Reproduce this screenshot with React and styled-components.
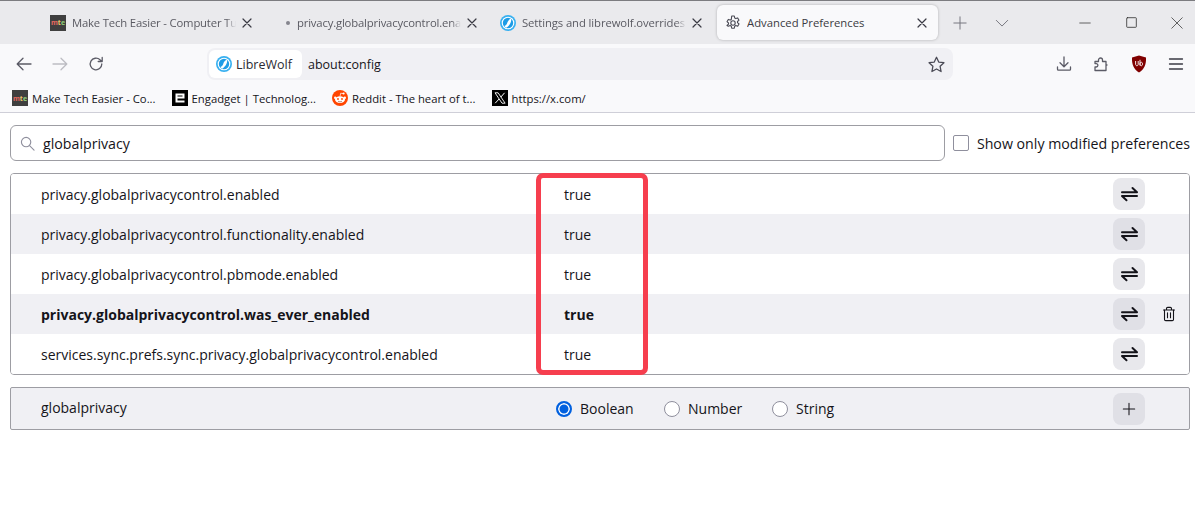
import React from 'react'
import styled, { createGlobalStyle } from 'styled-components'

const FONT = '"Open Sans", "Noto Sans", sans-serif'

const prefs = [
  { name: 'privacy.globalprivacycontrol.enabled' },
  { name: 'privacy.globalprivacycontrol.functionality.enabled' },
  { name: 'privacy.globalprivacycontrol.pbmode.enabled' },
  { name: 'privacy.globalprivacycontrol.was_ever_enabled', modified: true },
  { name: 'services.sync.prefs.sync.privacy.globalprivacycontrol.enabled' },
]

function Icon({ size = 16, color = '#5b5b66', width = 1.3, children }) {
  return (
    <svg width={size} height={size} viewBox="0 0 16 16" fill="none" stroke={color} strokeWidth={width} strokeLinecap="round" strokeLinejoin="round">
      {children}
    </svg>
  )
}

const CloseIcon = ({ size = 10, color = '#3a3a44' }) => (
  <svg width={size} height={size} viewBox="0 0 10 10" fill="none" stroke={color} strokeWidth="1.2" strokeLinecap="round">
    <path d="M1 1l8 8M9 1l-8 8" />
  </svg>
)

const GearIcon = () => (
  <Icon color="#4a4a55" width={1.1}>
    <path d="M6.7 1h2.6l.4 2 1.1.6 1.9-.7 1.3 2.3-1.5 1.3v1.2l1.5 1.3-1.3 2.3-1.9-.7-1.1.6-.4 2H6.7l-.4-2-1.1-.6-1.9.7L2 10.5l1.5-1.3V8L2 6.7l1.3-2.3 1.9.7 1.1-.6z" />
    <circle cx="8" cy="8" r="2.2" />
  </Icon>
)

const ToggleIcon = () => (
  <svg width="17" height="16" viewBox="0 0 17 16" fill="none" stroke="#15141a" strokeWidth="2" strokeLinecap="round" strokeLinejoin="round">
    <path d="M1 6.200h15L11.500 2" />
    <path d="M16 10H1l4.500 4.200" />
  </svg>
)

const TrashIcon = () => (
  <Icon size={16} color="#15141a" width={1.1}>
    <path d="M2.5 4h11M5.5 4V2.6c0-.8.5-1.2 1.2-1.2h2.6c.7 0 1.2.4 1.2 1.2V4" />
    <path d="M3.5 4v9.4c0 .7.5 1.2 1.2 1.2h6.6c.7 0 1.2-.5 1.2-1.2V4" />
    <path d="M6.5 6.8v5M9.5 6.8v5" />
  </Icon>
)

const MteLogo = () => (
  <MteBox>
    <MteLetter $color="#e8695f">m</MteLetter>
    <MteLetter $color="#e9c46a">t</MteLetter>
    <MteLetter $color="#8fd07a">e</MteLetter>
  </MteBox>
)

const LibreWolfLogo = ({ size = 16 }) => (
  <svg width={size} height={size} viewBox="0 0 16 16">
    <circle cx="8" cy="8" r="8" fill="#38b0f0" />
    <circle cx="8" cy="8" r="6.3" fill="#fff" />
    <circle cx="8" cy="8" r="5.2" fill="#1e9ce6" />
    <path d="M11.2 3.6c.3 3-1 6.6-5 9.2-.8-.5-1.4-1-1.8-1.8 1.6-.4 2.4-1.6 2.8-3 .5-1.9 1.9-3.6 4-4.4z" fill="#fff" />
  </svg>
)

const EngadgetLogo = () => (
  <svg width="16" height="16" viewBox="0 0 16 16">
    <rect width="16" height="16" fill="#000" />
    <path d="M3.5 3.5h9v5h-7v2h7v2h-9zM5.5 5.5v1h5v-1z" fill="#fff" fillRule="evenodd" />
  </svg>
)

const RedditLogo = () => (
  <svg width="16" height="16" viewBox="0 0 16 16">
    <circle cx="8" cy="8" r="8" fill="#ff4500" />
    <ellipse cx="8" cy="9.6" rx="5" ry="3.4" fill="#fff" />
    <circle cx="3.2" cy="7.8" r="1.2" fill="#fff" />
    <circle cx="12.8" cy="7.8" r="1.2" fill="#fff" />
    <circle cx="11.6" cy="3.5" r="1.1" fill="#fff" />
    <path d="M8 6.4L8.7 3.2l2.6.4" stroke="#fff" strokeWidth=".7" fill="none" />
    <circle cx="6" cy="9" r=".9" fill="#ff4500" />
    <circle cx="10" cy="9" r=".9" fill="#ff4500" />
    <path d="M6 11.2c1.2.8 2.8.8 4 0" stroke="#8a3a1a" strokeWidth=".6" fill="none" />
  </svg>
)

const XLogo = () => (
  <svg width="16" height="16" viewBox="0 0 16 16">
    <rect width="16" height="16" fill="#000" />
    <path d="M3 2.8h3.1l7 10.4H10z" fill="none" stroke="#fff" strokeWidth=".9" />
    <path d="M12.6 2.8L8.8 7.1M7.1 9L3.2 13.2" stroke="#fff" strokeWidth="1" />
  </svg>
)

const UBlockLogo = () => (
  <svg width="16" height="18" viewBox="0 0 16 18">
    <path d="M8 .5l7 2c.3 6.5-1.500 11.800-7 15-5.500-3.200-7.300-8.500-7-15z" fill="#800000" />
    <path d="M4.600 6v3.200c0 1 .6 1.500 1.300 1.500s1.300-.5 1.300-1.500V6M9 4.800v5.800M9 9c0-1.200.6-1.700 1.300-1.700s1.200.5 1.200 1.700-.5 1.700-1.200 1.700S9 10.200 9 9z" fill="none" stroke="#fff" strokeWidth=".9" />
  </svg>
)

function App() {
  return (
    <Page>
      <GlobalStyle />
      <TabBar>
        <Tab>
          <MteLogo />
          <TabTitle $spacing={-0.17}>Make Tech Easier - Computer Tu</TabTitle>
          <CloseIcon />
        </Tab>
        <Tab>
          <TabDot />
          <TabTitle $spacing={-0.17}>privacy.globalprivacycontrol.ena</TabTitle>
          <CloseIcon />
        </Tab>
        <Tab>
          <LibreWolfLogo />
          <TabTitle $spacing={-0.1}>Settings and librewolf.overrides</TabTitle>
          <CloseIcon />
        </Tab>
        <Tab $active>
          <GearIcon />
          <TabTitle $active>Advanced Preferences</TabTitle>
          <CloseIcon />
        </Tab>
        <NewTab>
          <Icon size={14} color="#74747c" width={1.1}><path d="M8 1v14M1 8h14" /></Icon>
        </NewTab>
        <TabList>
          <Icon size={14} color="#74747c" width={1.1}><path d="M1.500 5l6.500 6.500L14.500 5" /></Icon>
        </TabList>
        <WindowControls>
          <WindowButton><Icon size={12} color="#333" width={1}><path d="M1 8h14" /></Icon></WindowButton>
          <WindowButton><Icon size={11} color="#333" width={1.200}><rect x="1" y="1" width="14" height="14" rx="1" /></Icon></WindowButton>
          <WindowButton><Icon size={12} color="#333" width={1}><path d="M1 1l14 14M15 1L1 15" /></Icon></WindowButton>
        </WindowControls>
      </TabBar>

      <NavBar>
        <NavButton>
          <Icon><path d="M15 8H1.500M7 2.200L1.200 8 7 13.800" /></Icon>
        </NavButton>
        <NavButton>
          <Icon color="#bdbdc3"><path d="M1 8h13.500M9 2.200L14.800 8 9 13.800" /></Icon>
        </NavButton>
        <NavButton>
          <Icon><path d="M13.800 8a5.800 5.800 0 1 1-1.800-4.200L14 5.500M14.200 1.500v4h-4" /></Icon>
        </NavButton>
        <UrlBar>
          <Identity>
            <LibreWolfLogo />
            <IdentityName>LibreWolf</IdentityName>
          </Identity>
          <UrlText>about:config</UrlText>
          <StarSlot>
            <Icon size={17} color="#4a4a55" width={1.2}><path d="M8 1.200l2.100 4.500 4.900.6-3.600 3.400.9 4.900L8 12.200l-4.300 2.400.9-4.900L1 6.300l4.900-.6z" /></Icon>
          </StarSlot>
        </UrlBar>
        <ToolButtons>
          <ToolButton>
            <Icon><path d="M8 1v9.500M4 6.800l4 4 4-4M1.500 11v2.200c0 .5.4.9.9.9h11.200c.5 0 .9-.4.9-.9V11" /></Icon>
          </ToolButton>
          <ToolButton>
            <Icon><path d="M2 5.500h3.500V4a2 2 0 0 1 4 0v1.500H13V9h1a2 2 0 0 1 0 0v0h-1v5.500H2V11h1.200a1.700 1.700 0 0 0 0-3.400H2z" /></Icon>
          </ToolButton>
          <ToolButton><UBlockLogo /></ToolButton>
          <ToolButton>
            <Icon color="#3a3a44"><path d="M1.500 3h13M1.500 8h13M1.500 13h13" /></Icon>
          </ToolButton>
        </ToolButtons>
      </NavBar>

      <BookmarkBar>
        <Bookmark><MteLogo /><BookmarkLabel>Make Tech Easier - Co...</BookmarkLabel></Bookmark>
        <Bookmark><EngadgetLogo /><BookmarkLabel>Engadget | Technolog...</BookmarkLabel></Bookmark>
        <Bookmark><RedditLogo /><BookmarkLabel>Reddit - The heart of t...</BookmarkLabel></Bookmark>
        <Bookmark><XLogo /><BookmarkLabel>https://x.com/</BookmarkLabel></Bookmark>
      </BookmarkBar>

      <Content>
        <SearchRow>
          <SearchBox>
            <Icon size={15} color="#8f8f9d" width={1.2}><circle cx="6.500" cy="6.500" r="5" /><path d="M10.200 10.200L15 15" /></Icon>
            <SearchText>globalprivacy</SearchText>
          </SearchBox>
          <CheckLabel>
            <CheckBox type="checkbox" readOnly />
            Show only modified preferences
          </CheckLabel>
        </SearchRow>

        <TableWrap>
          <PrefTable>
            {prefs.map((p, i) => (
              <PrefRow key={p.name} $odd={i % 2 === 1} $bold={p.modified}>
                <PrefName>{p.name}</PrefName>
                <PrefValue>true</PrefValue>
                <SquareButton $dark={i % 2 === 1}><ToggleIcon /></SquareButton>
                {p.modified && <TrashSlot><TrashIcon /></TrashSlot>}
              </PrefRow>
            ))}
          </PrefTable>
          <Highlight />
        </TableWrap>

        <AddRow>
          <AddName>globalprivacy</AddName>
          <RadioGroup>
            <RadioLabel><Radio type="radio" name="kind" defaultChecked />Boolean</RadioLabel>
            <RadioLabel><Radio type="radio" name="kind" />Number</RadioLabel>
            <RadioLabel><Radio type="radio" name="kind" />String</RadioLabel>
          </RadioGroup>
          <SquareButton $dark>
            <Icon size={14} color="#15141a" width={1.2}><path d="M8 1.500v13M1.500 8h13" /></Icon>
          </SquareButton>
        </AddRow>
      </Content>
    </Page>
  )
}

export default App

const GlobalStyle = createGlobalStyle`
  html, body {
    margin: 0;
    padding: 0;
    background: #fff;
  }
  * {
    box-sizing: border-box;
  }
`

const Page = styled.div`
  width: 1195px;
  height: 532px;
  overflow: hidden;
  font-family: ${FONT};
  color: #15141a;
  background: #fff;
`

const TabBar = styled.div`
  height: 44px;
  background: #eaeaed;
  border-top: 1px solid #7c7c80;
  padding: 4px 0 4px 42px;
  display: flex;
  align-items: stretch;
  gap: 4px;
`

const Tab = styled.div`
  width: 221px;
  padding: 0 11px 0 8px;
  display: flex;
  align-items: center;
  gap: 6px;
  border-radius: 6px;
  background: ${p => (p.$active ? '#f9f9fb' : 'transparent')};
  box-shadow: ${p => (p.$active ? '0 0 3px rgba(0,0,0,.25)' : 'none')};
  color: #4d4d55;
`

const TabTitle = styled.span`
  flex: 1;
  min-width: 0;
  font-size: 11.300px;
  letter-spacing: ${p => p.$spacing || 0}px;
  white-space: nowrap;
  overflow: hidden;
  color: ${p => (p.$active ? '#3b3b42' : '#5a5a62')};
  mask-image: ${p => (p.$active ? 'none' : 'linear-gradient(to right, #000 94%, transparent)')};
`

const TabDot = styled.span`
  width: 16px;
  height: 16px;
  flex-shrink: 0;
  position: relative;
  &::after {
    content: '';
    position: absolute;
    right: 1px;
    top: 6px;
    width: 4px;
    height: 4px;
    border-radius: 50%;
    background: #85858d;
  }
`

const NewTab = styled.div`
  width: 36px;
  display: flex;
  align-items: center;
  justify-content: center;
`

const TabList = styled.div`
  width: 36px;
  margin-left: 2px;
  display: flex;
  align-items: center;
  justify-content: center;
`

const WindowControls = styled.div`
  margin-left: auto;
  margin-right: -5px;
  display: flex;
  align-items: center;
`

const WindowButton = styled.div`
  width: 46px;
  display: flex;
  justify-content: center;
`

const NavBar = styled.div`
  height: 40px;
  background: #f9f9fb;
  display: flex;
  align-items: center;
  padding-left: 6px;
`

const NavButton = styled.div`
  width: 36px;
  height: 32px;
  display: flex;
  align-items: center;
  justify-content: center;
`

const UrlBar = styled.div`
  width: 746px;
  height: 32px;
  margin-left: 93px;
  padding: 2px;
  background: #f0f0f4;
  border-radius: 8px;
  display: flex;
  align-items: center;
`

const Identity = styled.div`
  width: 93px;
  height: 28px;
  background: #fff;
  border-radius: 6px;
  padding-left: 7px;
  display: flex;
  align-items: center;
  gap: 4px;
`

const IdentityName = styled.span`
  padding-top: 1px;
  font-size: 12.500px;
  color: #2b2a33;
`

const UrlText = styled.span`
  margin-left: 6px;
  padding-top: 1px;
  font-size: 12.500px;
  color: #15141a;
`

const StarSlot = styled.div`
  margin-left: auto;
  margin-right: 6px;
  display: flex;
`

const ToolButtons = styled.div`
  margin-left: 92px;
  display: flex;
  align-items: center;
`

const ToolButton = styled.div`
  width: 37.500px;
  display: flex;
  justify-content: center;
`

const BookmarkBar = styled.div`
  height: 29px;
  background: #f9f9fb;
  border-bottom: 1px solid #cfcfd8;
  padding-left: 12px;
  display: flex;
  align-items: center;
  gap: 16px;
`

const Bookmark = styled.div`
  display: flex;
  align-items: center;
  gap: 4px;
`

const BookmarkLabel = styled.span`
  font-size: 11.300px;
  color: #15141a;
  white-space: nowrap;
`

const MteBox = styled.span`
  width: 16px;
  height: 16px;
  flex-shrink: 0;
  background: #3f3f3f;
  display: flex;
  align-items: center;
  justify-content: center;
  font-size: 7px;
  font-weight: 700;
  line-height: 1;
`

const MteLetter = styled.span`
  color: ${p => p.$color};
`

const Content = styled.div`
  padding: 12px 5px 0 10px;
`

const SearchRow = styled.div`
  display: flex;
  align-items: center;
  height: 36px;
`

const SearchBox = styled.div`
  width: 935px;
  height: 36px;
  border: 1px solid #9d9da3;
  border-radius: 6px;
  padding-left: 9px;
  display: flex;
  align-items: center;
  gap: 8px;
`

const SearchText = styled.span`
  font-size: 14.200px;
`

const CheckLabel = styled.label`
  margin-left: 8px;
  display: flex;
  align-items: center;
  gap: 8px;
  font-size: 14.200px;
  white-space: nowrap;
`

const CheckBox = styled.input`
  appearance: none;
  margin: 0;
  width: 16px;
  height: 16px;
  border: 1px solid #8f8f9d;
  border-radius: 2px;
  background: #fff;
`

const TableWrap = styled.div`
  position: relative;
  margin-top: 12px;
`

const PrefTable = styled.div`
  border: 1px solid #9d9da3;
  border-radius: 4px;
  overflow: hidden;
`

const PrefRow = styled.div`
  height: 40px;
  display: grid;
  grid-template-columns: 553px 1fr 32px 44px;
  align-items: center;
  background: ${p => (p.$odd ? '#f0f0f4' : '#fff')};
  font-weight: ${p => (p.$bold ? 700 : 400)};
  font-size: 14px;
`

const PrefName = styled.span`
  padding-left: 30px;
  white-space: nowrap;
`

const PrefValue = styled.span``

const SquareButton = styled.div`
  width: 32px;
  height: 32px;
  border-radius: 8px;
  background: ${p => (p.$dark ? '#e0e0e6' : '#e8e8ec')};
  display: flex;
  align-items: center;
  justify-content: center;
`

const TrashSlot = styled.div`
  margin-left: 16px;
  display: flex;
`

const Highlight = styled.div`
  position: absolute;
  left: 526px;
  top: 0;
  width: 112px;
  height: 202px;
  border: 5px solid #f63e4e;
  border-radius: 7px;
  pointer-events: none;
`

const AddRow = styled.div`
  margin-top: 12px;
  height: 43px;
  border: 1px solid #9d9da3;
  border-radius: 2px;
  background: #f0f0f4;
  display: grid;
  grid-template-columns: 545px 1fr 32px 44px;
  align-items: center;
  font-size: 14px;
`

const AddName = styled.span`
  padding: 0 0 2px 30px;
`

const RadioGroup = styled.div`
  display: flex;
  align-items: center;
`

const RadioLabel = styled.label`
  width: 108px;
  display: flex;
  align-items: center;
  gap: 8px;
`

const Radio = styled.input`
  appearance: none;
  margin: 0;
  width: 16px;
  height: 16px;
  border-radius: 50%;
  border: 1px solid #8f8f9d;
  background: #fff;
  &:checked {
    border: 2px solid #0060df;
    background: #0060df;
    box-shadow: inset 0 0 0 1.500px #fff;
  }
`
